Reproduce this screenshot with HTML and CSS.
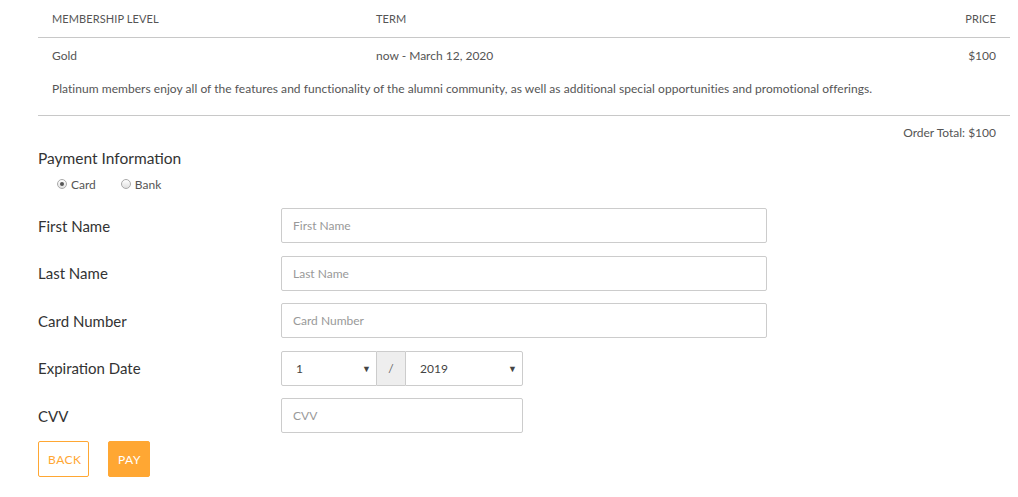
FILE: index.html
```html
<!DOCTYPE html>
<html>
<head>
<meta charset="utf-8">
<link rel="stylesheet" href="styles.css">
</head>
<body>
<div class="page">
  <div class="table">
    <div class="row head">
      <div class="cell">MEMBERSHIP LEVEL</div>
      <div class="cell">TERM</div>
      <div class="cell right">PRICE</div>
    </div>
    <div class="row item">
      <div class="cell">Gold</div>
      <div class="cell">now - March 12, 2020</div>
      <div class="cell right">$100</div>
    </div>
    <div class="desc">Platinum members enjoy all of the features and functionality of the alumni community, as well as additional special opportunities and promotional offerings.</div>
  </div>
  <div class="total">Order Total: $100</div>

  <h2 class="title">Payment Information</h2>
  <div class="radios">
    <span class="radio"><span class="dot checked"></span>Card</span>
    <span class="radio"><span class="dot"></span>Bank</span>
  </div>

  <div class="form">
    <div class="frow">
      <label class="label">First Name</label>
      <div class="field wide"><span class="ph">First Name</span></div>
    </div>
    <div class="frow">
      <label class="label">Last Name</label>
      <div class="field wide"><span class="ph">Last Name</span></div>
    </div>
    <div class="frow">
      <label class="label">Card Number</label>
      <div class="field wide"><span class="ph">Card Number</span></div>
    </div>
    <div class="frow">
      <label class="label">Expiration Date</label>
      <div class="group">
        <div class="sel month"><span>1</span><span class="arrow">▼</span></div>
        <div class="addon">/</div>
        <div class="sel year"><span>2019</span><span class="arrow">▼</span></div>
      </div>
    </div>
    <div class="frow">
      <label class="label">CVV</label>
      <div class="field short"><span class="ph">CVV</span></div>
    </div>
  </div>

  <div class="buttons">
    <button class="btn back">BACK</button>
    <button class="btn pay">PAY</button>
  </div>
</div>
</body>
</html>
```

FILE: styles.css
```css
* { box-sizing: border-box; }
html, body { margin: 0; padding: 0; background: #fff; }
body {
  font-family: "Lato", "Liberation Sans", sans-serif;
  color: #555;
  font-size: 12px;
}
.page {
  width: 972px;
  margin-left: 38px;
}
.table { border-bottom: 1px solid #c8c8c8; }
.row {
  display: grid;
  grid-template-columns: 324px 324px 1fr;
}
.cell { padding: 0 14px; }
.right { text-align: right; }
.head {
  height: 38px;
  align-items: center;
  border-bottom: 1px solid #c8c8c8;
  font-size: 11px;
  color: #555;
  letter-spacing: 0.1px;
  padding-bottom: 1px;
}
.item {
  height: 34px;
  align-items: center;
}
.desc {
  padding: 9px 14px 18px;
  line-height: 16px;
  letter-spacing: 0.04px;
}
.total {
  text-align: right;
  padding: 9px 14px 0;
  height: 32px;
}
.title {
  margin: 0;
  font-weight: normal;
  font-size: 15.5px;
  line-height: 20px;
  color: #333;
  height: 22px;
}
.radios {
  display: flex;
  gap: 25px;
  padding-left: 19px;
  height: 28px;
  align-items: center;
  font-size: 12px;
}
.radio { display: inline-flex; align-items: center; }
.dot {
  width: 10px; height: 10px;
  border-radius: 50%;
  border: 1px solid #aaa;
  background: linear-gradient(#fff, #e0e0e0);
  margin-right: 4px;
  position: relative;
}
.dot.checked::after {
  content: "";
  position: absolute;
  left: 2px; top: 2px;
  width: 4px; height: 4px;
  border-radius: 50%;
  background: #555;
}
.form {
  padding-top: 10px;
  display: flex;
  flex-direction: column;
  gap: 12.5px;
}
.frow {
  display: flex;
  align-items: center;
  height: 35px;
}
.label {
  width: 243px;
  font-size: 15px;
  color: #333;
}
.field {
  height: 35px;
  border: 1px solid #ccc;
  border-radius: 2px;
  display: flex;
  align-items: center;
  padding-left: 11px;
}
.wide { width: 486px; }
.short { width: 242px; }
.ph { color: #999; font-size: 12px; }
.group {
  display: flex;
  height: 35px;
  width: 242px;
}
.sel {
  height: 35px;
  border: 1px solid #ccc;
  display: flex;
  align-items: center;
  justify-content: space-between;
  padding: 0 5px 0 14px;
  color: #444;
}
.month { width: 96px; border-radius: 2px 0 0 2px; }
.year { flex: 1; border-radius: 0 2px 2px 0; }
.arrow { font-size: 9px; color: #444; }
.addon {
  width: 28px;
  background: #eee;
  border-top: 1px solid #ccc;
  border-bottom: 1px solid #ccc;
  display: flex;
  align-items: center;
  justify-content: center;
  color: #666;
}
.buttons {
  display: flex;
  gap: 19px;
  margin-top: 8px;
}
.btn {
  font-family: "Lato", "Liberation Sans", sans-serif;
  height: 36px;
  font-size: 12px;
  letter-spacing: 0.5px;
  border-radius: 2px;
  border: 1px solid #ffa733;
  padding: 0 9px;
  cursor: pointer;
}
.back { background: #fff; color: #ffa733; width: 51px; }
.pay { background: #ffa733; color: #fff; width: 42px; }
```
